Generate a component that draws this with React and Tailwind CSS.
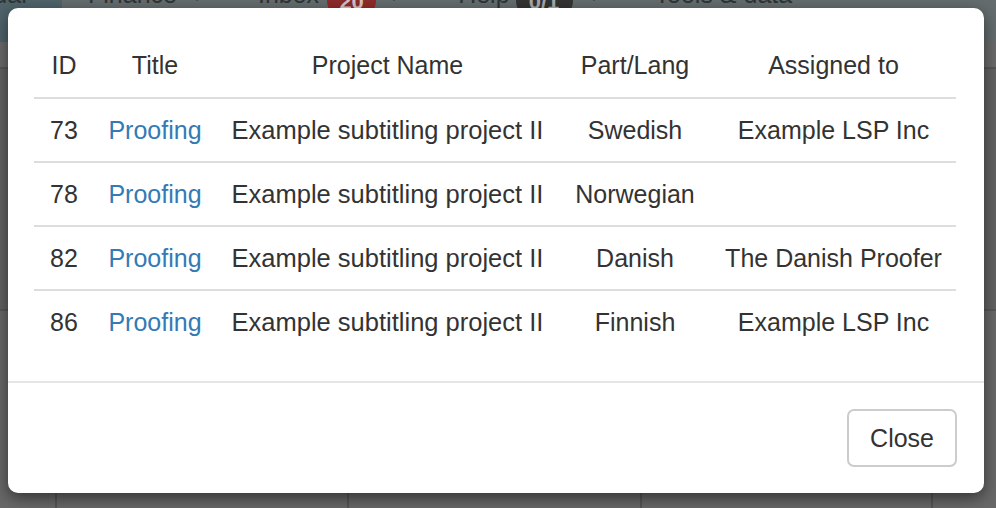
import { ChevronDown } from 'lucide-react';

const rows = [
	{ id: 73, title: 'Proofing', project: 'Example subtitling project II', lang: 'Swedish', assignee: 'Example LSP Inc' },
	{ id: 78, title: 'Proofing', project: 'Example subtitling project II', lang: 'Norwegian', assignee: '' },
	{ id: 82, title: 'Proofing', project: 'Example subtitling project II', lang: 'Danish', assignee: 'The Danish Proofer' },
	{ id: 86, title: 'Proofing', project: 'Example subtitling project II', lang: 'Finnish', assignee: 'Example LSP Inc' },
];

const Caret = ({ className }) => (
	<span className={`mb-[6px] block h-0 w-0 border-x-[4px] border-t-[4px] border-x-transparent border-t-[#2e3436] ${className}`} />
);

const NavBar = () => {
	return (
		<div className="flex h-[42px] overflow-hidden bg-[#646c6e] text-[25px] leading-[25px] text-[#2e3436]">
			<div className="flex h-full w-[62px] shrink-0 items-start overflow-hidden bg-[#4f636a]">
				<span className="-ml-[72px] -mt-[18px] whitespace-nowrap">Calendar</span>
			</div>
			<div className="-mt-[18px] flex h-[25px] items-end whitespace-nowrap">
				<span className="ml-[26px]">Finance</span>
				<Caret className="ml-[16px]" />
				<span className="ml-[57px]">Inbox</span>
				<span className="mb-[-11px] ml-[8px] flex h-[34px] w-[49px] items-center justify-center rounded-full bg-[#8e2b2b] text-[22px] font-bold text-[#d6c4c4]">
					20
				</span>
				<Caret className="ml-[14px]" />
				<span className="ml-[60px]">Help</span>
				<span className="mb-[-11px] ml-[6px] flex h-[34px] w-[57px] items-center justify-center rounded-full bg-[#333] text-[22px] font-bold text-[#aaa]">
					0/1
				</span>
				<Caret className="ml-[17px]" />
				<span className="ml-[57px]">Tools &amp; data</span>
			</div>
		</div>
	);
};

const PageBehind = () => {
	return (
		<div className="flex h-[508px] flex-col bg-[#666]">
			<NavBar />
			<div className="h-[27px] border-b-2 border-[#575757] bg-[#6a6a6a]" />
			<div className="h-[242px] border-b-2 border-[#575757] bg-[#626262]" />
			<div className="grid flex-1 grid-cols-[57px_292px_293px_291px_1fr] bg-[#686868]">
				<div className="border-r-2 border-[#555]" />
				<div className="border-r-2 border-[#555]" />
				<div className="border-r-2 border-[#555]" />
				<div className="border-r-2 border-[#555]" />
				<div />
			</div>
		</div>
	);
};

const TaskModal = () => {
	return (
		<div className="absolute left-[8px] top-[8px] w-[976px] rounded-[10px] bg-white shadow-[0_5px_15px_rgba(0,0,0,0.5)]">
			<div className="pb-[28px] pl-[26px] pr-[28px] pt-[26px]">
				<table className="w-full table-fixed border-collapse text-center text-[25px] text-[#333]">
					<colgroup>
						<col className="w-[60px]" />
						<col className="w-[122px]" />
						<col className="w-[343px]" />
						<col className="w-[152px]" />
						<col className="w-[245px]" />
					</colgroup>
					<thead>
						<tr className="border-b-2 border-[#ddd]">
							<th className="py-[14px] font-normal leading-[35px]">ID</th>
							<th className="py-[14px] font-normal leading-[35px]">Title</th>
							<th className="py-[14px] font-normal leading-[35px]">Project Name</th>
							<th className="py-[14px] font-normal leading-[35px]">Part/Lang</th>
							<th className="py-[14px] font-normal leading-[35px]">Assigned to</th>
						</tr>
					</thead>
					<tbody>
						{rows.map((row, i) => (
							<tr key={row.id} className={i > 0 ? 'border-t-2 border-[#ddd]' : ''}>
								<td className="whitespace-nowrap py-[13px] leading-[36px]">{row.id}</td>
								<td className="whitespace-nowrap py-[13px] leading-[36px]">
									<a href="#" className="text-[#337ab7]">
										{row.title}
									</a>
								</td>
								<td className="whitespace-nowrap py-[13px] text-[25.5px] leading-[36px]">{row.project}</td>
								<td className="whitespace-nowrap py-[13px] leading-[36px]">{row.lang}</td>
								<td className="whitespace-nowrap py-[13px] leading-[36px]">{row.assignee}</td>
							</tr>
						))}
					</tbody>
				</table>
			</div>
			<div className="flex justify-end border-t-2 border-[#e5e5e5] pb-[26px] pr-[27px] pt-[26px]">
				<button className="rounded-[7px] border-2 border-[#ccc] bg-white px-[21px] py-[9px] text-[25px] leading-[36px] text-[#333]">
					Close
				</button>
			</div>
		</div>
	);
};

const App = () => {
	return (
		<div className="relative h-[508px] w-[996px] overflow-hidden font-['Liberation_Sans',Arial,sans-serif]">
			<PageBehind />
			<TaskModal />
		</div>
	);
};

export default App;
